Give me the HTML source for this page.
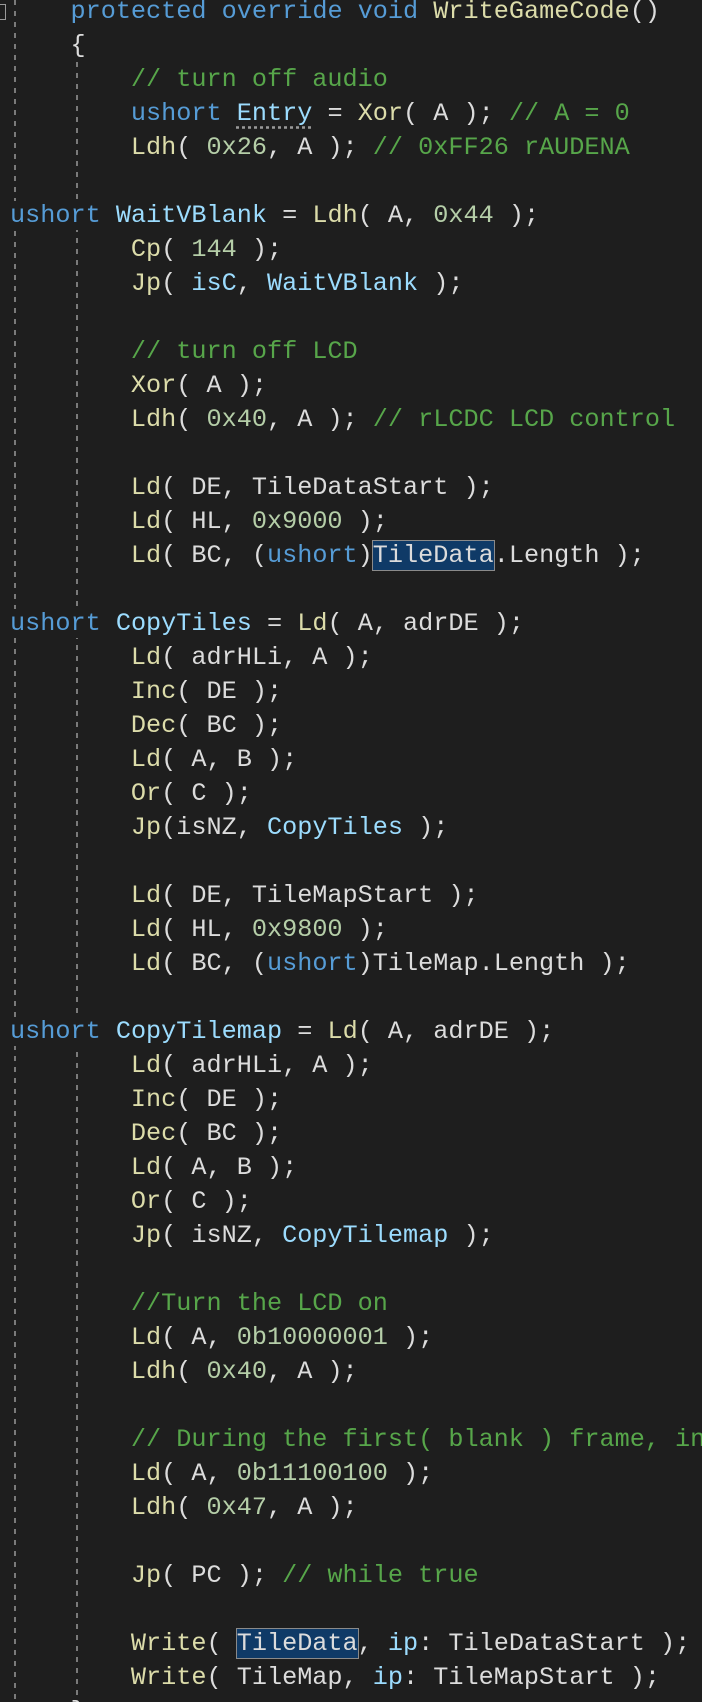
<!DOCTYPE html>
<html><head><meta charset="utf-8"><style>
html,body{margin:0;padding:0;background:#1e1e1e;width:702px;height:1702px;overflow:hidden;position:relative}
.g{position:absolute;width:2px;background:repeating-linear-gradient(to bottom,#7a7a7a 0 5px,transparent 5px 11px)}
#code{position:absolute;left:10px;top:-5px;width:692px;height:1707px;overflow:hidden;margin:0;font-family:"Liberation Mono",monospace;font-size:25.2px;line-height:34px;color:#dcdcdc;white-space:pre}
.l{display:block;height:34px}
.bg{background:#1e1e1e;position:relative;z-index:2}
.k{color:#569cd6}.c{color:#57a64a}.m{color:#dcdcaa}.n{color:#b5cea8}.v{color:#9cdcfe}
.sel{background:#0f3a67;outline:1.5px solid #8a8a8a;outline-offset:0}
.dot{text-decoration:underline dotted #999;text-underline-offset:6px}
</style></head><body>
<div style="position:absolute;left:-5px;top:4px;width:9px;height:14px;border:1px solid #999"></div>
<div class="g" style="left:14px;top:0;height:1702px"></div>
<div class="g" style="left:76px;top:62px;height:1640px"></div>
<pre id="code"><span class="l">    <span class="k">protected</span> <span class="k">override</span> <span class="k">void</span> <span class="m">WriteGameCode</span>()</span><span class="l">    {</span><span class="l">        <span class="c">// turn off audio</span></span><span class="l">        <span class="k">ushort</span> <span class="v dot">Entry</span> = <span class="m">Xor</span>( A ); <span class="c">// A = 0</span></span><span class="l">        <span class="m">Ldh</span>( <span class="n">0x26</span>, A ); <span class="c">// 0xFF26 rAUDENA</span></span><span class="l"> </span><span class="l"><span class="bg"><span class="k">ushort</span> <span class="v">WaitVBlank</span> = <span class="m">Ldh</span>( A, <span class="n">0x44</span> );</span></span><span class="l">        <span class="m">Cp</span>( <span class="n">144</span> );</span><span class="l">        <span class="m">Jp</span>( <span class="v">isC</span>, <span class="v">WaitVBlank</span> );</span><span class="l"> </span><span class="l">        <span class="c">// turn off LCD</span></span><span class="l">        <span class="m">Xor</span>( A );</span><span class="l">        <span class="m">Ldh</span>( <span class="n">0x40</span>, A ); <span class="c">// rLCDC LCD control</span></span><span class="l"> </span><span class="l">        <span class="m">Ld</span>( DE, TileDataStart );</span><span class="l">        <span class="m">Ld</span>( HL, <span class="n">0x9000</span> );</span><span class="l">        <span class="m">Ld</span>( BC, (<span class="k">ushort</span>)<span class="sel">TileData</span>.Length );</span><span class="l"> </span><span class="l"><span class="bg"><span class="k">ushort</span> <span class="v">CopyTiles</span> = <span class="m">Ld</span>( A, adrDE );</span></span><span class="l">        <span class="m">Ld</span>( adrHLi, A );</span><span class="l">        <span class="m">Inc</span>( DE );</span><span class="l">        <span class="m">Dec</span>( BC );</span><span class="l">        <span class="m">Ld</span>( A, B );</span><span class="l">        <span class="m">Or</span>( C );</span><span class="l">        <span class="m">Jp</span>(isNZ, <span class="v">CopyTiles</span> );</span><span class="l"> </span><span class="l">        <span class="m">Ld</span>( DE, TileMapStart );</span><span class="l">        <span class="m">Ld</span>( HL, <span class="n">0x9800</span> );</span><span class="l">        <span class="m">Ld</span>( BC, (<span class="k">ushort</span>)TileMap.Length );</span><span class="l"> </span><span class="l"><span class="bg"><span class="k">ushort</span> <span class="v">CopyTilemap</span> = <span class="m">Ld</span>( A, adrDE );</span></span><span class="l">        <span class="m">Ld</span>( adrHLi, A );</span><span class="l">        <span class="m">Inc</span>( DE );</span><span class="l">        <span class="m">Dec</span>( BC );</span><span class="l">        <span class="m">Ld</span>( A, B );</span><span class="l">        <span class="m">Or</span>( C );</span><span class="l">        <span class="m">Jp</span>( isNZ, <span class="v">CopyTilemap</span> );</span><span class="l"> </span><span class="l">        <span class="c">//Turn the LCD on</span></span><span class="l">        <span class="m">Ld</span>( A, <span class="n">0b10000001</span> );</span><span class="l">        <span class="m">Ldh</span>( <span class="n">0x40</span>, A );</span><span class="l"> </span><span class="l">        <span class="c">// During the first( blank ) frame, in</span></span><span class="l">        <span class="m">Ld</span>( A, <span class="n">0b11100100</span> );</span><span class="l">        <span class="m">Ldh</span>( <span class="n">0x47</span>, A );</span><span class="l"> </span><span class="l">        <span class="m">Jp</span>( PC ); <span class="c">// while true</span></span><span class="l"> </span><span class="l">        <span class="m">Write</span>( <span class="sel">TileData</span>, <span class="v">ip</span>: TileDataStart );</span><span class="l">        <span class="m">Write</span>( TileMap, <span class="v">ip</span>: TileMapStart );</span><span class="l">    }</span></pre>
</body></html>
